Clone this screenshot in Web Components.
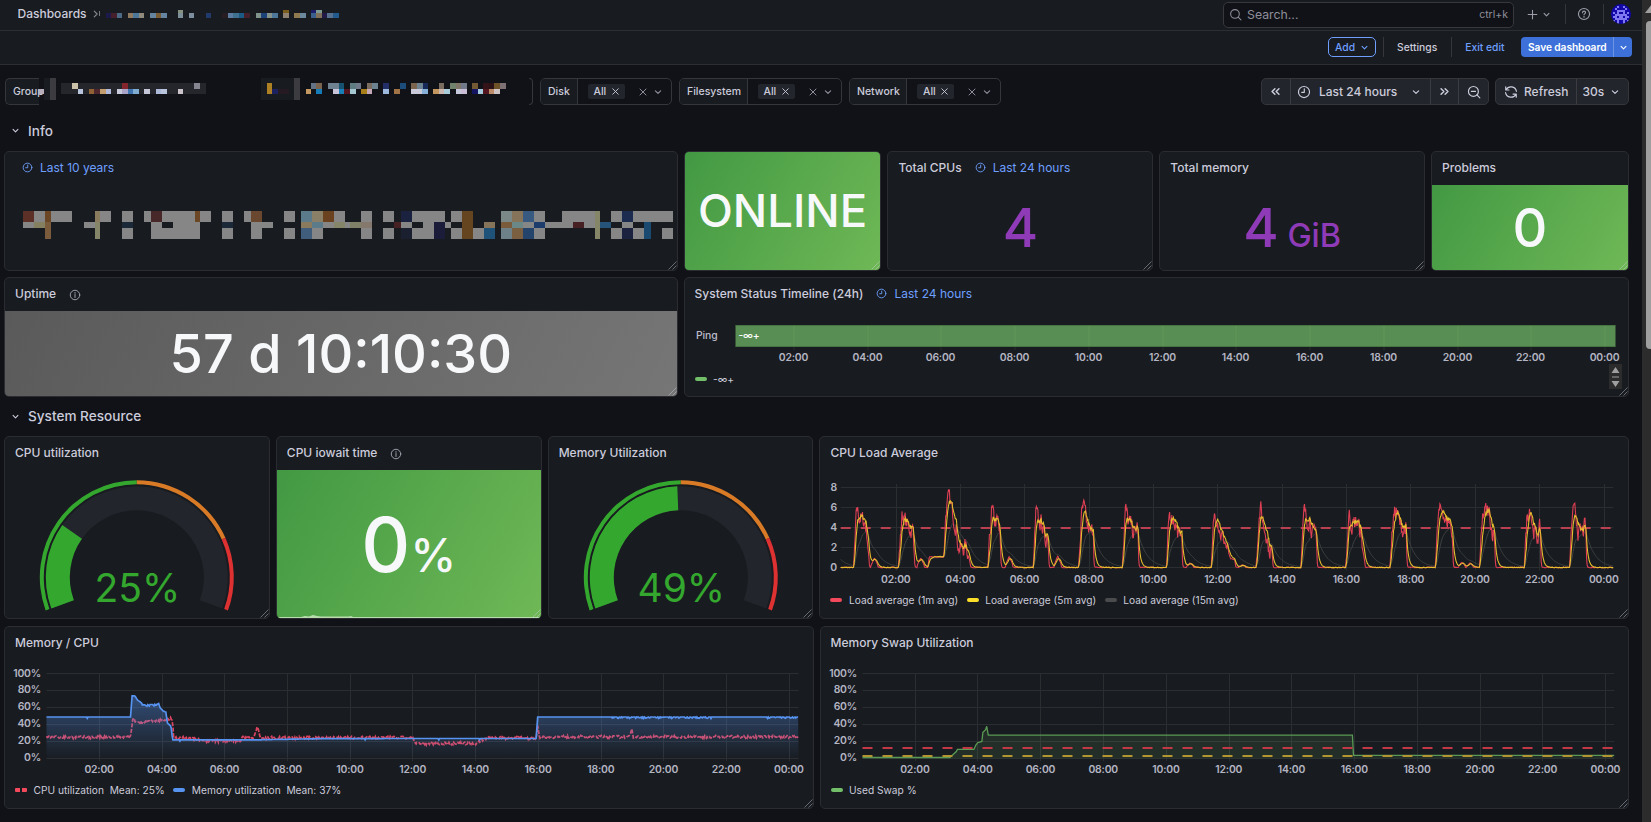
<!DOCTYPE html>
<html lang="en">
<head>
<meta charset="utf-8">
<title>Dashboard</title>
<style>
html,body{margin:0;padding:0;background:#111217;overflow:hidden;height:822px}
body{font-family:Inter,"Liberation Sans",sans-serif;color:#ccccdc;font-size:12px}
</style>
</head>
<body>
<dash-app></dash-app>
<script>
const ICONS={
 down:'<path d="M7.5 10l4.5 4.5 4.5-4.5"/>',
 sep:'<path d="M9 7l5 5-5 5"/>',
 x:'<path d="M6 6l12 12M18 6L6 18"/>',
 plus:'<path d="M12 4v16M4 12h16"/>',
 search:'<circle cx="11" cy="11" r="8"/><path d="M17 17l5 5"/>',
 zoomout:'<circle cx="11" cy="11" r="8.5"/><path d="M17 17l5 5M7.5 11h7"/>',
 clock:'<circle cx="12" cy="12" r="9.5"/><path d="M12.5 6.5v6h-4.5"/>',
 info:'<circle cx="12" cy="12" r="9.5"/><path d="M12 11v6M12 7v1.6"/>',
 help:'<circle cx="12" cy="12" r="9.5"/><path d="M9.4 9.8c.1-3.6 5.4-3.4 5.2-.2-.1 1.8-2.5 1.6-2.6 3.8M12 15.8v1.6"/>',
 left:'<path d="M11 7.5L6.500 12l4.500 4.500M17.500 7.500L13 12l4.500 4.500"/>',
 right:'<path d="M6.500 7.500L11 12l-4.500 4.500M13 7.500l4.500 4.500-4.500 4.500"/>',
 sync:'<path d="M3 3v5.500h5.500M3.500 8.300A9.500 9.500 0 0 1 21.300 11M21 21v-5.500h-5.500M20.500 15.700A9.500 9.500 0 0 1 2.700 13"/>'
};
const define=(name,html,ready)=>{
 const t=document.createElement('template');t.innerHTML=html;
 customElements.define(name,class extends HTMLElement{
  connectedCallback(){
   if(this.shadowRoot)return;
   const r=this.attachShadow({mode:'open'});
   r.appendChild(t.content.cloneNode(true));
   if(ready)ready.call(this,r);
  }
 });
};

define('ui-icon','<style>:host{display:inline-flex;flex:none}svg{display:block;fill:none;stroke:currentColor;stroke-linecap:round;stroke-linejoin:round}</style><svg viewBox="0 0 24 24"></svg>',function(r){
 const s=r.querySelector('svg'),n=this.getAttribute('size')||14;
 s.setAttribute('width',n);s.setAttribute('height',n);s.setAttribute('stroke-width',this.getAttribute('w')||2);
 s.innerHTML=ICONS[this.getAttribute('name')];
});

/* Redacted labels: coloured blocks, each "x0 x1 y0 y1 colour". */
define('redacted-blocks','<style>:host{display:block;flex:none}svg{display:block}</style><svg preserveAspectRatio="none" shape-rendering="crispEdges"></svg>',function(r){
 const s=r.querySelector('svg'),d=BLOCKS[this.getAttribute('set')];
 const [x,y,w,h]=d.box;
 s.setAttribute('viewBox',`${x} ${y} ${w} ${h}`);s.setAttribute('width',w);s.setAttribute('height',h);
 s.innerHTML=d.rows.map(([y0,y1,list])=>list.split(';').map(c=>{const [a,b,f]=c.trim().split(/\s+/);return `<rect x="${a/d.k}" y="${y0}" width="${(b-a)/d.k}" height="${y1-y0}" fill="${f==='g'?'#868686':f}"/>`}).join('')).join('');
});
const BLOCKS={
 crumb:{k:2.904,box:[104,6,240,12],rows:[
  [8,11,'517 532 #85907f;822 839 #7a5c1c;903 919 #1c1c6a;919 935 #7f9a94'],
  [11,16,'308 323 #1c1a4a;323 340 #45202a;340 354 #4a6a85;372 386 #8f7a60;386 404 #4d7799;404 418 #8f8a7c;436 453 #6484a0;453 468 #7a5c34;468 485 #6484a0;517 532 #7d909a;549 563 #7d8f9f;598 613 #203a6c;646 661 #271c22;661 677 #5c7ba0;677 694 #3f7090;694 709 #1c5a86;709 726 #45202a;743 758 #7f928c;758 775 #1c4378;775 790 #85938a;790 806 #4d7799;822 839 #8f8270;854 871 #8f7a50;871 888 #6b889c;903 919 #3a5f8c;919 935 #80705a;935 951 #211a46;951 967 #57708e;967 984 #235a8e']]},
 group:{k:2.904,box:[39,78,494,27],rows:[
  [78,89,'145 163 #3b3b40;128 145 #181b1f'],[89,94,'114 128 #b8aebb;128 145 #181b1f;145 163 #3b3b40'],[94,100,'128 145 #181b1f;145 163 #3b3b40'],
  [83,94,'177 598 #24262c'],
  [83,89,'209 226 #cbc0a8;354 372 #84242c;563 581 #85858f'],
  [89,94,'226 241 #b8c4dc;258 273 #8f6236;273 290 #4c262c;290 308 #c39c70;308 323 #b2badb;340 355 #c9c9dc;355 372 #aaa4c9;372 386 #3f74b0;386 404 #7fadd2;418 436 #c6c6d9;453 468 #aebad9;468 485 #b8c4dc;517 531 #cbc3ca'],
  [78,100,'758 854 #181b1f;854 871 #3b3b40'],[83,94,'775 790 #ad8123'],[89,94,'790 807 #1c2260;807 839 #251a22'],
  [83,89,'903 919 #627386;919 935 #7a644e;952 984 #6e8190;984 999 #165270;1016 1033 #5f7c82;1033 1048 #707a8a;1066 1080 #7a6c5e;1080 1098 #6d8290;1112 1130 #222e66;1161 1179 #1c4c7c;1193 1211 #7a644e;1211 1227 #6d8290;1227 1243 #152858;1275 1289 #7a6c5e;1307 1323 #70826c;1323 1339 #7f7668;1339 1356 #707a8a;1371 1388 #735a34;1402 1419 #331218;1419 1434 #2b1216;1434 1452 #6d5228;1452 1469 #7d7174'],
  [89,94,'888 903 #c29760;919 935 #157cb8;967 984 #c9c3d9;984 999 #1880b8;999 1016 #54161e;1016 1034 #a4c6d0;1048 1066 #a87e18;1066 1080 #c4a8b8;1112 1130 #9cb8dc;1144 1161 #a07245;1193 1225 #cacaDB;1225 1243 #86b0d8;1257 1275 #c39660;1275 1289 #ccb8b0;1289 1307 #a8ccd9;1323 1339 #c8c8dc;1339 1356 #c9bdd5;1371 1388 #141460;1388 1402 #a5cade;1402 1419 #54161e;1419 1434 #bc8c68;1434 1452 #cdc3c4']]},
 host:{k:2.272,box:[21.5,211,652,28],rows:[
  [211,222,'50 75 #5c3026;75 100 g;100 114 #6b4726;114 163 g;214 227 #8a7a5e;227 252 g;277 302 g;327 341 g;341 366 #472727;366 441 g;441 454 #6b4726;454 479 g;504 529 g;554 568 g;568 593 #69482f;643 668 g;682 707 #5b7a8a;707 732 #8a8068;732 757 #6b4220;757 782 g;820 845 g;870 895 g;909 934 #1a2240;934 1009 g;1023 1048 g;1048 1073 #644520;1136 1161 #7a8888;1161 1186 #85745a;1186 1211 #385a80;1211 1236 g;1275 1350 g;1350 1363 #858568;1388 1413 g;1413 1438 #1b2c50;1438 1527 g'],
  [222,228,'50 75 g;75 100 #858060;100 114 #7a5c3c;189 214 g;214 227 #85856a;277 302 #1b2838;341 366 g;391 454 g;504 529 #1b2838;568 618 g;682 707 #8a7a5e;707 732 #5b7a8a;732 757 g;757 782 #85856a;782 795 g;795 820 #808068;820 845 #85786c;895 909 #472023;909 934 g;959 984 g;984 1009 #1a1c3a;1009 1023 g;1048 1073 #644520;1098 1123 #85745a;1136 1161 #7a5c3c;1161 1186 #6a8888;1186 1211 g;1211 1236 #1c3c6b;1236 1300 g;1300 1325 #472023;1325 1350 g;1350 1363 #858568;1363 1388 #255478;1413 1438 g;1463 1477 #1b4a70'],
  [228,239,'100 114 #7a5c3c;214 227 #85856a;277 302 g;341 454 g;504 529 g;568 593 g;643 668 g;682 707 #405e7c;707 732 g;820 845 g;870 895 g;909 934 #1a2030;934 984 g;984 1009 #1a1c3a;1023 1048 g;1048 1073 #644520;1073 1098 g;1098 1123 #1f5278;1136 1161 #6e8088;1161 1186 #7a6040;1186 1211 #25446b;1211 1236 g;1350 1363 #858568;1388 1413 g;1413 1438 #1a2240;1438 1463 g;1463 1477 #1b4a70;1502 1527 g']]}
};

define('user-avatar','<style>:host{display:block;width:20px;height:20px;flex:none}svg{display:block;border-radius:50%}</style><svg width="20" height="20" viewBox="0 0 20 20" shape-rendering="crispEdges"><rect width="20" height="20" fill="#1208a8"/><g fill="#7f78f0"></g></svg>',function(r){
 const p=['..........','...#..#...','..#....#..','...####...','.#.#..#.#.','..######..','.##.##.##.','..######..','.#.#..#.#.','...#..#...'];
 r.querySelector('g').innerHTML=p.map((l,y)=>[...l].map((c,x)=>c==='#'?`<rect x="${x*2}" y="${y*2}" width="2" height="2"/>`:'').join('')).join('');
});

define('top-bar',`<style>
:host{display:flex;box-sizing:border-box;height:31px;border-bottom:1px solid #2c2e33;background:#181b1f;align-items:center;padding:0 11px 3px 17.500px;font-weight:500}
.name{width:68px}
.sep{margin:0 0 0 3px;color:#85868f}.bar{width:1px;height:5px;background:#777881;margin:0 4px 0 -3.500px}
.search{margin-left:auto;display:flex;align-items:center;box-sizing:border-box;width:291px;height:26px;margin-top:2px;border:1px solid #36383e;border-radius:5px;background:#111217;padding:0 5px 0 5px;color:#8e8e9a;font-weight:400;font-size:12.300px}
.search ui-icon{margin-right:5px}.key{margin-left:auto;font-size:10.500px}
.grp{display:flex;align-items:center;color:#9d9eaa;margin-top:1px}
i{width:1px;height:20px;background:#34363b}
</style>
<span class="name">Dashboards</span><ui-icon class="sep" name="sep" size="14"></ui-icon><span class="bar"></span><redacted-blocks set="crumb"></redacted-blocks>
<div class="search"><ui-icon name="search" size="13"></ui-icon><span>Search...</span><span class="key">ctrl+k</span></div>
<div class="grp"><ui-icon name="plus" size="13" style="margin-left:12px"></ui-icon><ui-icon name="down" size="13" style="margin:0 12px 0 .500px"></ui-icon><i></i><ui-icon name="help" size="14" w="1.900" style="margin:0 12px 0 11.500px"></ui-icon><i></i><user-avatar style="margin-left:7px"></user-avatar></div>`);

define('edit-bar',`<style>
:host{display:flex;box-sizing:border-box;height:34px;border-bottom:1px solid #2c2e33;background:#181b1f;align-items:center;justify-content:flex-end;padding:0 10px 1px 0;font-size:10.300px;font-weight:500;white-space:nowrap}
.add{display:flex;align-items:center;box-sizing:border-box;height:20px;width:48px;border:1px solid #6e9fff;border-radius:5px;color:#6e9fff;padding-left:6.500px}
i{width:1px;height:20px;background:#34363b}
.save{display:flex;height:20px;align-items:center;background:#3d71d9;color:#fff;border-radius:4px;width:111px;box-sizing:border-box;padding-left:7px;font-weight:600;font-size:10.200px;letter-spacing:-.07px}
.save i{background:#6d94e2;margin-left:auto}
.save ui-icon{margin:0 2.500px}
</style>
<div class="add">Add<ui-icon name="down" size="13" style="margin-left:3px"></ui-icon></div><i style="margin:0 13.500px 0 7px"></i><span>Settings</span><i style="margin:0 13px 0 14px"></i><span style="color:#6e9fff">Exit edit</span><div class="save" style="margin-left:16.500px"><span>Save dashboard</span><i></i><ui-icon name="down" size="13"></ui-icon></div>`);

define('filter-select',`<style>
:host{display:flex;box-sizing:border-box;height:27px;border:1px solid #34363b;border-radius:5px;align-items:center;font-size:10.500px;font-weight:500;overflow:hidden;flex:none}
.l{display:flex;box-sizing:border-box;height:100%;align-items:center;background:#181b1f;border-right:1px solid #34363b;padding-left:7px}
.tag{display:flex;align-items:center;box-sizing:border-box;background:#22252b;height:15px;width:37px;border-radius:2px;margin-left:10px;padding:0 4px 0 6px;justify-content:space-between}
.e{margin-left:auto;display:flex;align-items:center;color:#8e8e9a;padding-right:6px;gap:2px}
</style><span class="l"></span><span class="tag">All<ui-icon name="x" size="11"></ui-icon></span><span class="e"><ui-icon name="x" size="12"></ui-icon><ui-icon name="down" size="14"></ui-icon></span>`,function(r){
 const l=r.querySelector('.l');l.textContent=this.getAttribute('label');l.style.width=this.getAttribute('lw')+'px';this.style.width=this.getAttribute('w')+'px';
});

define('group-filter',`<style>
:host{display:flex;flex:none;width:528px;height:27px;font-size:10.500px;font-weight:500}
.l{box-sizing:border-box;width:34px;height:27px;border:1px solid #34363b;border-right:0;border-radius:5px 0 0 5px;background:#181b1f;padding:6px 0 0 7px;line-height:13px;white-space:nowrap}
redacted-blocks{width:490px;overflow:hidden}
.r{box-sizing:border-box;width:4px;height:27px;border:1px solid #34363b;border-left:0;border-radius:0 5px 5px 0}
</style><span class="l">Group</span><redacted-blocks set="group"></redacted-blocks><span class="r"></span>`);

define('button-group',`<style>
:host{display:flex;box-sizing:border-box;height:27px;border:1px solid #34363b;border-radius:5px;background:#22252b;flex:none;font-weight:500;overflow:hidden}
::slotted(*){display:flex;align-items:center;box-sizing:border-box;border-left:1px solid #3a3c42;height:100%}
::slotted(:first-child){border-left:0}
</style><slot></slot>`);

define('control-row',`<style>
:host{display:flex;height:27px;padding:13px 0 0 5px;align-items:flex-start}
.right{display:flex;margin-left:auto;gap:6px;padding-right:13px}
</style><group-filter></group-filter>
<filter-select label="Disk" lw="36.500" w="132" style="margin-left:7px"></filter-select>
<filter-select label="Filesystem" lw="67.500" w="163" style="margin-left:7px"></filter-select>
<filter-select label="Network" lw="57" w="152" style="margin-left:7px"></filter-select>
<div class="right">
<button-group style="width:228px"><span style="width:28.500px;justify-content:center;padding-right:2px"><ui-icon name="left" size="15" w="2.400"></ui-icon></span><span style="width:140.500px;padding-left:6px"><ui-icon name="clock" size="14"></ui-icon><b style="font-weight:500;margin:0 11.500px 0 7.500px">Last 24 hours</b><ui-icon name="down" size="14"></ui-icon></span><span style="width:28px;justify-content:center;padding-right:1px"><ui-icon name="right" size="15" w="2.400"></ui-icon></span><span style="width:30px;justify-content:center"><ui-icon name="zoomout" size="14"></ui-icon></span></button-group>
<button-group style="width:134px"><span style="width:79.500px;padding-left:7.500px"><ui-icon name="sync" size="14"></ui-icon><b style="font-weight:500;margin-left:6.500px">Refresh</b></span><span style="padding-left:6px"><b style="font-weight:500;margin-right:3.500px">30s</b><ui-icon name="down" size="14"></ui-icon></span></button-group>
</div>`);

define('section-title',`<style>:host{display:flex;align-items:center;font-size:13.600px;font-weight:500;padding-left:9px;box-sizing:border-box}ui-icon{margin-right:6px}</style><ui-icon name="down" size="13"></ui-icon><slot></slot>`);

define('panel-grid',`<style>:host{display:grid;grid-template-columns:repeat(24,minmax(0,1fr));column-gap:6px;width:1625px;margin-left:4px}</style><slot></slot>`);

define('dash-panel',`<style>
:host{display:flex;flex-direction:column;box-sizing:border-box;border:1px solid #2a2c31;border-radius:5px;background:#181b1f;position:relative;overflow:hidden;min-width:0}
.h{display:flex;align-items:center;height:33px;flex:none;padding:0 0 2px 10px;font-weight:500;box-sizing:border-box}
.a{color:#6e9fff;display:none;align-items:center;font-weight:400;gap:7px}
.i{display:none;color:#9d9eaa;margin:2px 0 0 13px}
:host([title-less]) .h{display:none}
:host([link]) .a{display:flex}:host([info]) .i{display:flex}
.grip{position:absolute;right:0;bottom:0;width:9px;height:9px;stroke:rgba(204,204,220,.45);fill:none}
slot{display:flex;flex-direction:column;flex:1;min-height:0}
</style><div class="h"><span class="t"></span><ui-icon class="i" name="info" size="12"></ui-icon><span class="a"><ui-icon name="clock" size="11"></ui-icon><span class="k"></span></span></div><slot></slot>
<svg class="grip" viewBox="0 0 9 9"><path d="M0.500 8.500L8.500 0.500M4.500 8.500L8.500 4.500"/></svg>`,function(r){
 this.style.gridColumn='span '+this.getAttribute('cols');
 const h=this.getAttribute('heading')||'';
 r.querySelector('.t').textContent=h;
 r.querySelector('.k').textContent=this.getAttribute('link')||'';
 r.querySelector('.a').style.marginLeft=h?'13px':'7px';
});

define('stat-value',`<style>
:host{display:flex;flex:1;align-items:center;justify-content:center;font-weight:500;font-size:54px;line-height:1;color:#f7f8fa;min-height:0}
:host([tone=green]){background:linear-gradient(120deg,#429943,#6fb856)}
:host([tone=grey]){background:linear-gradient(120deg,#5a5a5a,#767676)}
:host([tone=purple]){color:#8f3bb8}
div{display:flex;align-items:baseline;white-space:pre}
</style><div><slot></slot></div>`);

define('gauge-dial',`<style>:host{display:block}svg{display:block;overflow:visible}text{font:400 39px Inter,sans-serif;fill:#34a82e;text-anchor:middle}</style><svg width="263" height="147" viewBox="0 0 263 147"></svg>`,function(r){
 const v=+this.getAttribute('value'),cx=131.8,cy=107.3;
 const pt=(a,q)=>{const t=(200-2.2*a)*Math.PI/180;return [cx+q*Math.cos(t),cy-q*Math.sin(t)].map(n=>n.toFixed(2)).join(' ')};
 const arc=(a,b,o,n,f)=>{const L=(b-a)*2.2>180?1:0;return `<path fill="${f}" d="M${pt(a,o)}A${o} ${o} 0 ${L} 1 ${pt(b,o)}L${pt(b,n)}A${n} ${n} 0 ${L} 0 ${pt(a,n)}Z"/>`};
 r.querySelector('svg').innerHTML=arc(0,100,91,67,'#22252b')+arc(0,v,91,67,'#34a82e')+arc(0,50,97,93,'#34a82e')+arc(50,80,97,93,'#d97a26')+arc(80,100,97,93,'#de3131')+`<text x="132.300" y="132.300">${v}%</text>`;
});

let seed=7;const rnd=()=>(seed=(seed*16807)%2147483647)/2147483647-.5;
const poly=p=>p.map(a=>a[0].toFixed(1)+','+a[1].toFixed(1)).join(' ');
const lerp=(k,t)=>{for(let i=1;i<k.length;i++)if(t<=k[i][0]){const a=k[i-1],b=k[i];return a[1]+(b[1]-a[1])*(b[0]===a[0]?1:(t-a[0])/(b[0]-a[0]))}return k[k.length-1][1]};
const SERIES={
 load(c){
  const keys=[[50,.05]];
  /* each burst: minute it starts, then minute/value pairs, then minute it ends */
  [[74,80,6.7,84,5.5,90,5.3,96,4.8,100,3.2,104],[158,165,5.9,170,5.2,176,4.6,182,4,186,4.2,189],
   [213,216,1.1,241,1.1,243],[243,247,6.2,253,7.7,259,6.2,266,4.4,271,2,285,2.3,290,1.2,294],
   [326,333,6.5,338,5,345,5,349,3,351],[411,416,6.2,421,5,428,4.8,433,2.8,438,4,441],
   [496,502,6,506,6.6,512,4.6,518,3.6,524,4.4,525],[578,584,6.6,589,5,595,4.6,601,3.6,607,4.8,609],
   [661,666,6,672,5.5,679,4.6,685,3,689,4.8,691],[745,750,5.8,756,5.6,762,3.6,770,3,775,1.8,781,.9,789,.8,791],
   [829,834,5.4,838,6.4,843,4.5,849,3.6,853,1.8,858,2,861],[913,919,6.4,924,5.2,930,5.2,936,3.4,942,4.2,944],
   [997,1003,6,1008,4.6,1018,5,1025,3.9,1030,1.6,1034],[1080,1086,5.4,1092,6.4,1098,4.8,1105,4,1110,4.6,1112],
   [1165,1171,5.9,1179,6.5,1184,4.8,1191,5.2,1197,3.8,1199],[1248,1254,5.6,1259,6.2,1266,6,1272,3.8,1276,3.9,1278],
   [1332,1337,5.6,1343,6.7,1348,4.3,1356,3.2,1362,4.4,1364],[1417,1422,5.9,1428,6,1434,3.6,1441,4,1447,4.6,1449]
  ].forEach(b=>{const z=b[b.length-1];keys.push([b[0],keys[keys.length-1][1]>.5&&b[0]===243?1.1:.05]);for(let i=1;i<b.length-1;i+=2)keys.push([b[i],b[i+1]]);keys.push([z,b[0]===213?1.1:.05])});
  const bumps={113:1,200:1,366:1.2,457:1.2,705:.5,803:.3,1215:.6,1230:.5};
  let a=.05,m=.05,q=.9;const R=[],Y=[],G=[];let n=0;
  for(let t=50;t<=1499;t++){
   let v=lerp(keys,t);if(v>1.5)v*=.92;for(const k in bumps){const d=Math.abs(t-k);if(d<7)v=Math.max(v,bumps[k]*(1-d/9))}
   n=n*.2+rnd()*(v>1.5?2:.1);
   const w=Math.max(.03,v+n);a+=(w-a)*.75;m+=(v*1.04-m)*.24;q+=(w-q)*.06;
   const x=815+t/1.8756,y=z=>568-z*10.03;
   R.push([x,y(a)]);Y.push([x,y(m+(v>1.5?n*.22:n*.4))]);G.push([x,y(q)]);
  }
  return `<polyline points="${poly(G)}" stroke="#3f4243"/><polyline points="${poly(R)}" stroke="#dd3f54" stroke-width="1.100"/><polyline points="${poly(Y)}" stroke="#e5bd2e" stroke-width="1.100"/>`;
 },
 mem(){
  const y=z=>758.3-z*.843;
  const M=[[89,49],[250,49],[252,74],[258,74],[263,69],[268,67],[274,63.500],[300,64],[303,66],[306,60],[312,56],[317,55],[320,42],[327,38],[330,21.800],[500,22],[620,23.400],[1025,23.500],[1028,49],[1527,49]];
  const C=[[89,25],[250,25],[253,44],[256,49],[258,43],[302,44],[306,45],[326,47],[330,43],[332,25],[375,23],[384,20.500],[460,20.500],[464,24.500],[484,24.500],[493,38],[498,24.500],[789,24.500],[794,17.500],[912,17.500],[920,21],[932,24.500],[1025,24],[1028,39],[1031,25.500],[1204,25.500],[1208,35],[1211,25.500],[1527,25.500]];
  const A=[],B=[];
  for(let t=89;t<=1527;t+=1.5){
   const x=t/1.912;let m=lerp(M,t);
   const r=rnd();if(((t>1165&&t<1360)||t>1465||(t>270&&t<303))&&r>0)m-=r*3.500;else if(Math.abs(r)>.495)m-=1.500;
   A.push([x,y(m)]);B.push([x,y(lerp(C,t)+rnd()*3.300)]);
  }
  return `<defs><linearGradient id="mg" x1="0" y1="0" x2="0" y2="1"><stop offset="0" stop-color="#5794f2" stop-opacity=".42"/><stop offset="1" stop-color="#5794f2" stop-opacity=".02"/></linearGradient></defs><polyline points="${poly(B)}" stroke="#dc4560" stroke-width="1.700" stroke-dasharray="4 1.500"/><polygon points="46.500,758.300 ${poly(A)} 798.600,758.300" fill="url(#mg)"/><polyline points="${poly(A)}" stroke="#5794f2" stroke-width="1.700"/>`;
 },
 swap(){
  const y=z=>758.3-z*.843;
  const p=[[89,1],[253,1],[258,4],[265,8],[267,10.500],[298,10.500],[302,16],[305,18.500],[313,20],[315,31],[320,34],[322,38],[325,27.500],[1008,27.500],[1010,3.500],[1499,3.500]].map(([a,b])=>[815+a/1.8756,y(b)]);
  return `<polygon points="${poly(p)} 1614.200,758.300 862.500,758.300" fill="#73bf69" fill-opacity=".12"/><polyline points="${poly(p)}" stroke="#5a9a54" stroke-width="1.300"/><path d="M862.500 748H1614" stroke="#c23845" stroke-width="2" stroke-dasharray="10 10"/><path d="M862.500 756H1614" stroke="#b39532" stroke-width="2" stroke-dasharray="10 10"/>`;
 }
};
const CHARTS={
 load:{box:[821,470,807,119],l:841.7,r:1614.2,top:484,x0:897.1,dx:64.36,ty:582.5,rows:[['8',487.500],['6',507.500],['4',527.500],['2',547.500],['0',567.500]],lx:838,extra:'<path d="M841.700 528H1614" stroke="#b84050" stroke-width="2" stroke-dasharray="10 10"/>'},
 mem:{box:[5,660,807,119],l:46.5,r:798.6,top:674,x0:99.4,dx:62.71,ty:772.5,rows:[['100%',673.500],['80%',690],['60%',707],['40%',724],['20%',741],['0%',758]],lx:41,extra:''},
 swap:{box:[821,660,807,119],l:862.5,r:1614.2,top:674,x0:915.2,dx:62.77,ty:772.5,rows:[['100%',673.500],['80%',690],['60%',707],['40%',724],['20%',741],['0%',758]],lx:857,extra:''}
};
const hours=['02:00','04:00','06:00','08:00','10:00','12:00','14:00','16:00','18:00','20:00','22:00','00:00'];

define('time-chart',`<style>:host{display:block}svg{display:block;fill:none}text{font:600 10.400px Inter,sans-serif;fill:#b4b5c3;letter-spacing:-.2px}.x{text-anchor:middle}.y{text-anchor:end}.grid{stroke:#2b2e31;stroke-width:1}</style><svg></svg>`,function(r){
 const k=this.getAttribute('kind'),c=CHARTS[k],s=r.querySelector('svg'),b=c.box;
 s.setAttribute('viewBox',b.join(' '));s.setAttribute('width',b[2]);s.setAttribute('height',b[3]);
 const bottom=c.rows[c.rows.length-1][1];
 s.innerHTML='<g class="grid">'+c.rows.map(w=>`<path d="M${c.l} ${Math.floor(w[1])+.5}H${c.r}"/>`).join('')+hours.map((h,i)=>`<path d="M${Math.floor(c.x0+i*c.dx)+.5} ${c.top}V${bottom+3}"/>`).join('')+'</g>'
 +c.extra+SERIES[k](c)
 +c.rows.map(w=>`<text class="y" x="${c.lx}" y="${w[1]+3}">${w[0]}</text>`).join('')+hours.map((h,i)=>`<text class="x" x="${c.x0+i*c.dx-.3}" y="${c.ty}">${h}</text>`).join('');
});

define('legend-item',`<style>:host{display:flex;align-items:center;font-size:10.200px;white-space:pre}i{width:12px;height:3.500px;border-radius:2px;margin-right:6.500px;background:var(--c)}:host([dash]) i{background:linear-gradient(90deg,var(--c) 5px,transparent 5px 7px,var(--c) 7px);border-radius:1px}</style><i></i><slot></slot>`);
define('chart-legend','<style>:host{display:flex;gap:8.500px;padding-left:10px;height:22px;align-items:center}</style><slot></slot>');

define('status-timeline',`<style>
:host{display:block}svg{display:block}text{font:500 10.400px Inter,sans-serif;fill:#bcbdcb;letter-spacing:-.08px}.hr{font-weight:600;fill:#b4b5c3;letter-spacing:-.2px}
.foot{display:flex;align-items:center;padding-left:10px;height:24px}
.sc{margin:-5px 6px 0 auto;width:13px;height:25px;background:#2c2c2c}
</style><svg width="943" height="56" viewBox="684.500 311 943 56"></svg><div class="foot"><legend-item style="--c:#73bf69">-∞+</legend-item><svg class="sc" viewBox="0 0 13 25"><path d="M6.500 3L10.500 9H2.500ZM6.500 23L10.500 17H2.500Z" fill="#9f9f9f"/><path d="M3 13H10" stroke="#9f9f9f"/></svg></div>`,function(r){
 r.querySelector('svg').innerHTML='<rect x="735" y="325.500" width="880" height="21" fill="#588e53"/><path d="M735 325.500H1615M735 346.500H1615" stroke="#467541"/>'
 +hours.map((h,i)=>{const x=Math.floor(793.3+i*73.75);return `<path d="M${x+.5} 326V346" stroke="#609759"/><path d="M${x+.5} 347V350" stroke="#2b2e31"/><text class="hr" x="${x}" y="361.300" text-anchor="middle">${h}</text>`}).join('')
 +'<text x="695.500" y="338.500">Ping</text><text x="738" y="338.700" style="fill:#fff;letter-spacing:-.2px">-∞+</text>';
});

define('page-scroll',`<style>:host{display:block;background:#2c2c2c;overflow:hidden}svg{display:block}</style><svg width="9" height="822" viewBox="1642 0 9 822"><path d="M1645 13L1652 4V13Z" fill="#9f9f9f"/><rect x="1646" y="21" width="10" height="328" rx="4" fill="#9f9f9f"/></svg>`);

define('dash-app',`<style>
:host{display:grid;grid-template-columns:1642px 9px;height:822px;overflow:hidden}
main{min-width:0}
.spark{display:block;margin-top:-5px;flex:none}
</style>
<main>
<top-bar></top-bar><edit-bar></edit-bar><control-row></control-row>
<section-title style="height:46px;padding-top:5px">Info</section-title>
<panel-grid style="grid-template-rows:120px">
<dash-panel cols="10" link="Last 10 years"><redacted-blocks set="host" style="margin:26px 0 0 16.500px"></redacted-blocks></dash-panel>
<dash-panel cols="3" title-less><stat-value tone="green" style="font-size:45.500px">ONLINE</stat-value></dash-panel>
<dash-panel cols="4" heading="Total CPUs" link="Last 24 hours"><stat-value tone="purple">4</stat-value></dash-panel>
<dash-panel cols="4" heading="Total memory"><stat-value tone="purple">4<span style="font-size:32.400px"> GiB</span></stat-value></dash-panel>
<dash-panel cols="3" heading="Problems"><stat-value tone="green">0</stat-value></dash-panel>
</panel-grid>
<panel-grid style="grid-template-rows:120px;margin-top:6px">
<dash-panel cols="10" heading="Uptime" info><stat-value tone="grey">57 d 10:10:30</stat-value></dash-panel>
<dash-panel cols="14" heading="System Status Timeline (24h)" link="Last 24 hours"><status-timeline></status-timeline></dash-panel>
</panel-grid>
<section-title style="height:39px;padding-bottom:1px">System Resource</section-title>
<panel-grid style="grid-template-rows:183px">
<dash-panel cols="4" heading="CPU utilization"><gauge-dial value="25"></gauge-dial></dash-panel>
<dash-panel cols="4" heading="CPU iowait time" info><stat-value tone="green" style="font-size:76px">0<span style="font-size:46px">%</span></stat-value><svg class="spark" width="264" height="5" viewBox="0 0 264 5"><path d="M0 5V4H24L28 3L32 3.500L36 2L40 3L44 3.500H72L74 3L76 4H264V5Z" fill="#b9dcae"/></svg></dash-panel>
<dash-panel cols="4" heading="Memory Utilization"><gauge-dial value="49"></gauge-dial></dash-panel>
<dash-panel cols="12" heading="CPU Load Average"><time-chart kind="load"></time-chart><chart-legend><legend-item style="--c:#f2495c">Load average (1m avg)</legend-item><legend-item style="--c:#fade2a">Load average (5m avg)</legend-item><legend-item style="--c:#4a4b4d">Load average (15m avg)</legend-item></chart-legend></dash-panel>
</panel-grid>
<panel-grid style="grid-template-rows:183px;margin-top:7px">
<dash-panel cols="12" heading="Memory / CPU"><time-chart kind="mem"></time-chart><chart-legend><legend-item dash style="--c:#f2495c">CPU utilization  Mean: 25%</legend-item><legend-item style="--c:#5794f2">Memory utilization  Mean: 37%</legend-item></chart-legend></dash-panel>
<dash-panel cols="12" heading="Memory Swap Utilization"><time-chart kind="swap"></time-chart><chart-legend><legend-item style="--c:#73bf69">Used Swap %</legend-item></chart-legend></dash-panel>
</panel-grid>
</main>
<page-scroll></page-scroll>`);
</script>
</body>
</html>
